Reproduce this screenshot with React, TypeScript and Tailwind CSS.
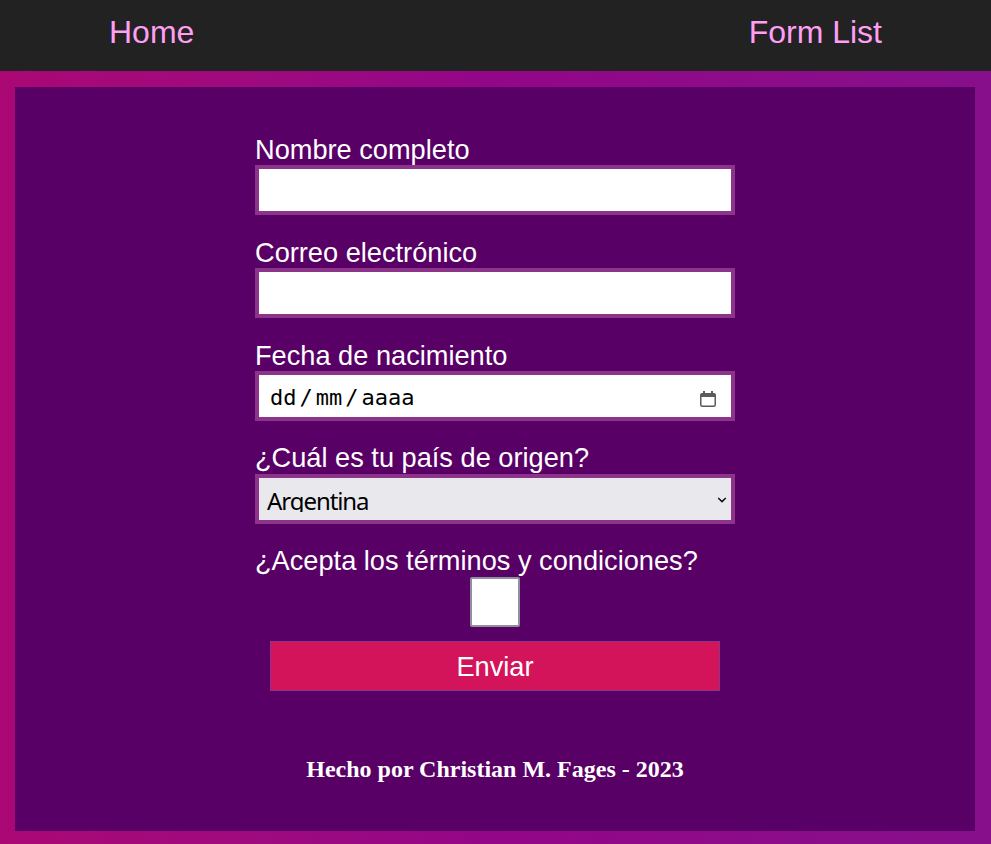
import React from "react";

const box = "h-[50px] w-full border-4 border-[#8b3489]";

function Field({ label, children }: { label: string; children?: React.ReactNode }) {
  return (
    <label className="mb-[21px] flex flex-col text-[27.2px] leading-[32px] text-white">
      <span className="h-8 whitespace-nowrap pt-px">{label}</span>
      {children ?? <input className={`${box} bg-white`} />}
    </label>
  );
}

export default function App() {
  return (
    <div className="flex h-[844px] w-full flex-col bg-linear-to-r from-[#aa0774] via-[#930688] to-[#870f8b] font-['Liberation_Sans',Arial,sans-serif]">
      <nav className="flex h-[71px] shrink-0 justify-between bg-[#222222] px-[109px] pt-3.5 text-[32px] leading-[37px] text-[#ff9ff3]">
        <a>Home</a>
        <a>Form List</a>
      </nav>
      <main className="ml-[15px] mr-4 mt-4 flex h-[744px] flex-col items-center bg-[#580065] pt-[46px]">
        <form className="flex w-[480px] flex-col">
          <Field label="Nombre completo" />
          <Field label="Correo electrónico" />
          <Field label="Fecha de nacimiento">
            <div className={`${box} flex items-center justify-between bg-white pl-[11px] pr-[15px] text-black`}>
              <div className="flex gap-[3px] pt-[3px] font-['DejaVu_Sans_Mono',monospace] text-[22px]">
                <span>dd</span>
                <span>/</span>
                <span>mm</span>
                <span>/</span>
                <span>aaaa</span>
              </div>
              <svg className="mt-1.5" width="16" height="16" viewBox="0 0 16 16" fill="none">
                <path d="M3 0h2v2h6V0h2v2h1a2 2 0 0 1 2 2v2H0V4a2 2 0 0 1 2-2h1z" fill="#5b5b5b" />
                <path d="M.75 5v8.75a1.5 1.5 0 0 0 1.5 1.5h11.5a1.5 1.5 0 0 0 1.5-1.5V5" stroke="#5b5b5b" strokeWidth="1.5" />
              </svg>
            </div>
          </Field>
          <div className="-mt-px">
            <Field label="¿Cuál es tu país de origen?">
              <div className={`${box} mt-px flex items-center justify-between bg-[#e9e9ed] pl-2 pr-1 text-black`}>
                <span className="-mt-px h-[26px] overflow-hidden font-['Noto_Sans',sans-serif] text-[24px] leading-[30px] tracking-[-1.1px]">Argentina</span>
                <svg className="mt-px" width="10" height="6" viewBox="0 0 10 6" fill="none" stroke="#111" strokeWidth="1.5">
                  <path d="M1.2 1l3.8 3.6L8.8 1" />
                </svg>
              </div>
            </Field>
          </div>
          <label className="flex flex-col items-center text-[27.2px] leading-[32px] text-white">
            <span className="h-8 self-start whitespace-nowrap">¿Acepta los términos y condiciones?</span>
            <input type="checkbox" className="size-[50px] appearance-none rounded-[2px] border-2 border-[#8f8f9d] bg-white" />
          </label>
          <button type="button" className="mx-[15px] mt-3.5 h-[50px] border border-[#8b3489] bg-[#d4145a] pt-px text-[27.2px] leading-[32px] text-white">
            Enviar
          </button>
        </form>
        <footer className="mt-[65px] whitespace-nowrap font-['Liberation_Serif',serif] text-[24px] font-bold leading-[27px] text-white">
          Hecho por Christian M. Fages - 2023
        </footer>
      </main>
    </div>
  );
}
